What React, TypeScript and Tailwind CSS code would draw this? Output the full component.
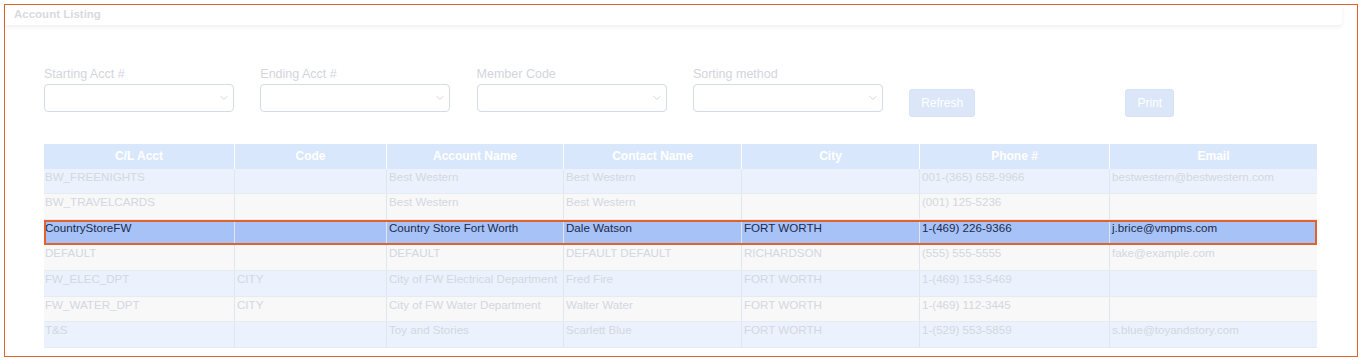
import React from "react";
import { ChevronDown } from "lucide-react";

const cols = [190, 152, 177, 178, 178, 190, 208];
const headers = ["C/L Acct", "Code", "Account Name", "Contact Name", "City", "Phone #", "Email"];

const rows: string[][] = [
  ["BW_FREENIGHTS", "", "Best Western", "Best Western", "", "001-(365) 658-9966", "bestwestern@bestwestern.com"],
  ["BW_TRAVELCARDS", "", "Best Western", "Best Western", "", "(001) 125-5236", ""],
  ["CountryStoreFW", "", "Country Store Fort Worth", "Dale Watson", "FORT WORTH", "1-(469) 226-9366", "j.brice@vmpms.com"],
  ["DEFAULT", "", "DEFAULT", "DEFAULT DEFAULT", "RICHARDSON", "(555) 555-5555", "fake@example.com"],
  ["FW_ELEC_DPT", "CITY", "City of FW Electrical Department", "Fred Fire", "FORT WORTH", "1-(469) 153-5469", ""],
  ["FW_WATER_DPT", "CITY", "City of FW Water Department", "Walter Water", "FORT WORTH", "1-(469) 112-3445", ""],
  ["T&S", "", "Toy and Stories", "Scarlett Blue", "FORT WORTH", "1-(529) 553-5859", "s.blue@toyandstory.com"],
];

function Field({ label }: { label: string }) {
  return (
    <div className="flex w-[190px] shrink-0 flex-col">
      <div className="h-[14px] text-[12.5px] leading-[14px] text-[#d2d5dc]">{label}</div>
      <div className="mt-[3px] flex h-[28px] items-center justify-end rounded-[4px] border border-[#d5dae7] bg-white pr-[3px]">
        <ChevronDown size={12} strokeWidth={1.6} color="#c5c9d1" />
      </div>
    </div>
  );
}

export default function App() {
  return (
    <div className="bg-white p-[4px]" style={{ fontFamily: '"Liberation Sans", Arial, sans-serif' }}>
      <div className="h-[353px] w-[1354px] border border-[#e0622c] bg-white">
        <div className="flex h-[20px] w-[1337px] items-center rounded-br-[3px] bg-white pl-[9px] shadow-[0_2px_4px_rgba(0,0,0,0.07)]">
          <span className="text-[11.5px] font-bold text-[#d9dadd]">Account Listing</span>
        </div>

        <div className="ml-[39px] mt-[42px] flex gap-[26.3px]">
          <Field label="Starting Acct #" />
          <Field label="Ending Acct #" />
          <Field label="Member Code" />
          <Field label="Sorting method" />
          <div className="w-[190px] shrink-0 pt-[22px]">
            <button className="h-[28px] rounded-[3px] border border-[#d6e2f6] bg-[#dbe6f8] px-[11px] text-[12px] text-white">
              Refresh
            </button>
          </div>
          <div className="w-[190px] shrink-0 pt-[22px]">
            <button className="h-[28px] rounded-[3px] border border-[#d6e2f6] bg-[#dbe6f8] px-[11px] text-[12px] text-white">
              Print
            </button>
          </div>
        </div>

        <div className="ml-[39px] mt-[27px] w-[1273px]">
          <div className="flex h-[24.5px] bg-[#d9e7fc]">
            {headers.map((h, i) => (
              <div
                key={h}
                style={{ width: cols[i] }}
                className={`flex items-center justify-center text-[12px] font-bold text-white ${i > 0 ? "border-l border-white" : ""}`}
              >
                {h}
              </div>
            ))}
          </div>
          {rows.map((r, ri) => {
            const hl = ri === 2;
            const bg = hl ? "bg-[#a7c2f7]" : ri % 2 === 0 ? "bg-[#ebf2fd]" : "bg-[#f8f8f8]";
            return (
              <div
                key={ri}
                className={`flex h-[25.67px] border-b border-[#e6eaf1] ${bg} ${hl ? "outline-2 outline-[#e0622c] -outline-offset-2" : ""}`}
              >
                {r.map((c, ci) => (
                  <div
                    key={ci}
                    style={{ width: cols[ci] }}
                    className={`overflow-hidden whitespace-nowrap text-[11.6px] leading-[16px] ${ci > 0 ? "border-l border-[#e1e5ec] pl-[2px]" : "pl-[1px]"} ${hl ? "text-[#1b2a4e]" : "text-[#d3d7df]"}`}
                  >
                    {c}
                  </div>
                ))}
              </div>
            );
          })}
        </div>
      </div>
    </div>
  );
}
